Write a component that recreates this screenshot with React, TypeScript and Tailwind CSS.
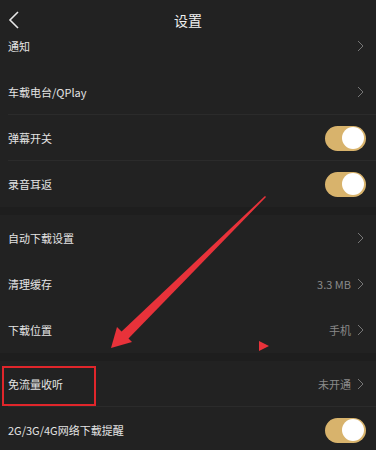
import React from 'react';

type Row = {
  label: string;
  value?: string;
  toggle?: boolean;
  divider?: boolean;
};

const SECTIONS: Row[][] = [
  [
    { label: '通知' },
    { label: '车载电台/QPlay', divider: true },
    { label: '弹幕开关', toggle: true, divider: true },
    { label: '录音耳返', toggle: true },
  ],
  [
    { label: '自动下载设置' },
    { label: '清理缓存', value: '3.3 MB' },
    { label: '下载位置', value: '手机' },
  ],
  [
    { label: '免流量收听', value: '未开通', divider: true },
    { label: '2G/3G/4G网络下载提醒', toggle: true },
  ],
];

const Chevron = () => (
  <svg width="7" height="12" viewBox="0 0 7 12" fill="none" className="ml-[6px]">
    <path d="M1 1l5 5-5 5" stroke="#767676" strokeWidth="1" />
  </svg>
);

const Toggle = () => (
  <div className="w-[41px] h-[25px] rounded-full bg-[#d8b36c] flex items-center justify-end pr-[2px]">
    <div className="w-[22px] h-[22px] rounded-full bg-white" />
  </div>
);

const SettingRow: React.FC<{ row: Row }> = ({ row }) => (
  <div className="relative h-[46px] flex items-center justify-between pl-2 pr-[12px]">
    <span className="text-[11px] text-[#e4e4e4]">{row.label}</span>
    {row.toggle ? (
      <div className="mr-[-2px]">
        <Toggle />
      </div>
    ) : (
      <div className="flex items-center">
        {row.value && <span className="text-[11px] text-[#8a8a8a]">{row.value}</span>}
        <Chevron />
      </div>
    )}
    {row.divider && <div className="absolute bottom-0 left-2 right-0 h-px bg-[#2b2b2b]" />}
  </div>
);

export default function App() {
  return (
    <div
      className="relative w-[376px] h-[450px] overflow-hidden bg-[#222222]"
      style={{ fontFamily: '"Noto Sans CJK SC", "Noto Sans", sans-serif' }}
    >
      {/* Header */}
      <div className="relative h-[23px] flex items-center justify-center">
        <svg width="12" height="18" viewBox="0 0 12 18" fill="none" className="absolute left-[8px] top-[11px]">
          <path d="M10 1L2 9l8 8" stroke="#e8e8e8" strokeWidth="1.6" />
        </svg>
        <span className="mt-[17px] text-[14px] text-[#f0f0f0]">设置</span>
      </div>

      {SECTIONS.map((section, i) => (
        <div key={i}>
          {i > 0 && <div className="h-2 bg-[#1e1e1e]" />}
          {section.map((row) => (
            <SettingRow key={row.label} row={row} />
          ))}
        </div>
      ))}

      {/* Annotations */}
      <svg className="absolute inset-0 pointer-events-none" width="376" height="450" viewBox="0 0 376 450">
        <polygon points="265,196 266,197 127,340 120,333" fill="#e8323a" />
        <polygon points="111,348 117,327 132,342" fill="#e8323a" />
        <polygon points="259,341 269,346 259,351" fill="#e8323a" />
      </svg>
      <div className="absolute left-[2px] top-[366px] w-[94px] h-[40px] border-2 border-[#e0262b]" />
    </div>
  );
}
